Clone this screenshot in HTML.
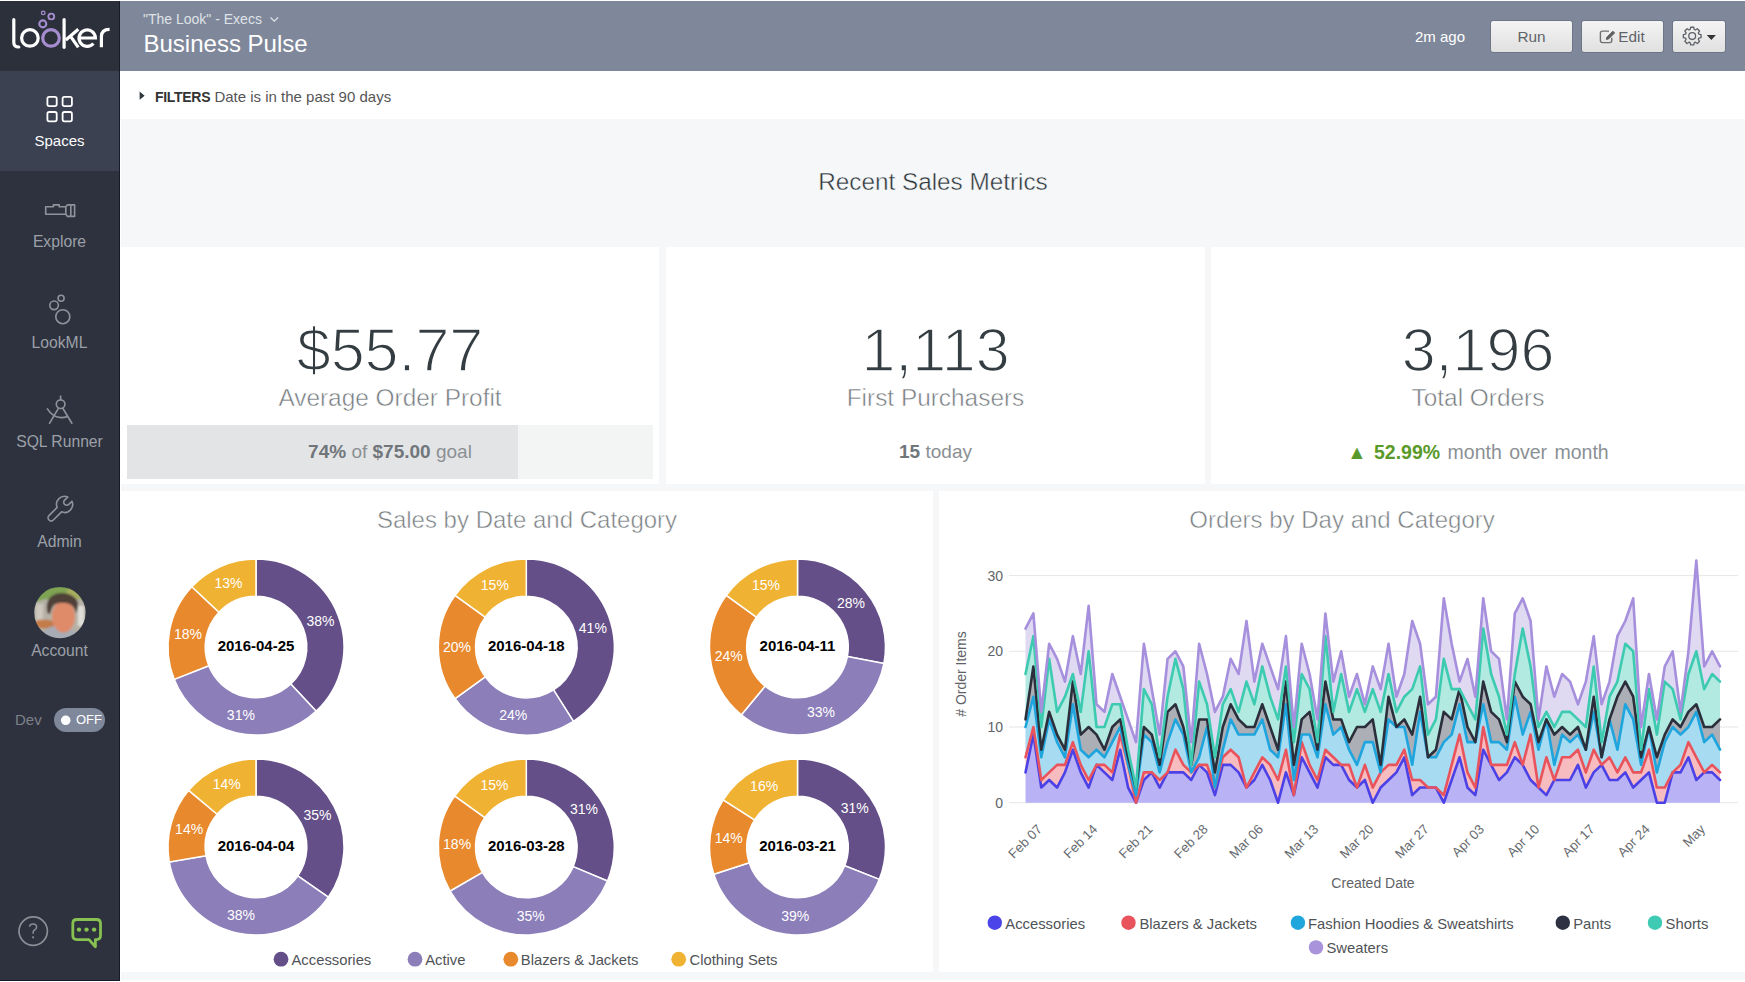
<!DOCTYPE html>
<html><head><meta charset="utf-8">
<style>
*{margin:0;padding:0;box-sizing:border-box}
html,body{width:1745px;height:982px;overflow:hidden;background:#fff;font-family:"Liberation Sans",sans-serif}
.abs{position:absolute;white-space:nowrap}
#side{position:absolute;left:0;top:1px;width:120px;height:980px;background:#2d323e;border-right:1px solid #151c28;border-bottom:1px solid #151c28}
#logo{position:absolute;left:0;top:0;width:119px;height:70px;background:#2b303b}
.nav{position:absolute;left:0;width:119px;height:100px;color:#9ca0a8;font-size:16px}
.nav .lbl{position:absolute;left:0;width:119px;top:60px;text-align:center}
.nav svg{position:absolute;left:0;top:0}
.lbl2{position:absolute;left:0;width:119px;text-align:center;color:#9ca0a8;font-size:15.7px;white-space:nowrap}
#hdr{position:absolute;left:120px;top:1px;width:1625px;height:70px;background:#7f889a}
#filt{position:absolute;left:121px;top:71px;width:1624px;height:48px;background:#fff}
#content{position:absolute;left:121px;top:119px;width:1624px;height:861px;background:#f6f7f9}
.tile{position:absolute;background:#fff}
.btn{position:absolute;top:18.5px;height:33px;border-radius:3px;background:linear-gradient(#f4f4f4,#e0e0e0);border:1px solid #6d7587;color:#606468;font-size:15.3px;text-align:center;line-height:32.5px}
.big{position:absolute;left:0;width:100%;text-align:center;color:#343d42;font-size:61px;-webkit-text-stroke:1.6px #fff;paint-order:normal}
.sub{position:absolute;left:0;width:100%;text-align:center;color:#767c80;font-size:24.4px;-webkit-text-stroke:0.5px #fff}
.cmp{position:absolute;left:0;width:100%;text-align:center;color:#8b9094;font-size:19px;white-space:nowrap}
.cmp b{color:#70767a}
svg text{font-family:"Liberation Sans",sans-serif}
.dl{fill:#fff;font-size:14px;text-anchor:middle}
.dc{fill:#000;font-size:15px;font-weight:bold;text-anchor:middle}
.ya{fill:#606468;font-size:14px;text-anchor:end}
.xa{fill:#686c70;font-size:13.3px;text-anchor:end}
.lg{fill:#4f5357;font-size:14.8px}
.at{fill:#5f6367;font-size:14px;text-anchor:middle}
.ttl{position:absolute;left:0;width:100%;text-align:center;color:#7a7f83;font-size:24px;-webkit-text-stroke:0.5px #fff}
</style></head>
<body>
<div id="side">
  <div id="logo"></div>
  <div class="nav" style="top:70px;height:100px;background:#3b4150"></div>
  <div class="lbl2" style="top:131px;color:#fff;font-size:15px">Spaces</div>
  <div class="lbl2" style="top:232px">Explore</div>
  <div class="lbl2" style="top:332.5px">LookML</div>
  <div class="lbl2" style="top:432px">SQL Runner</div>
  <div class="lbl2" style="top:531.5px">Admin</div>
  <div class="lbl2" style="top:641px">Account</div>
  <div class="abs" style="left:15px;top:710px;color:#7d8189;font-size:15px">Dev</div>
  <div class="abs" style="left:54px;top:707px;width:51px;height:24px;border-radius:12px;background:#7f889a"></div>
  <div class="abs" style="left:76px;top:711px;color:#fff;font-size:13px">OFF</div>
</div>
<svg width="120" height="982" style="position:absolute;left:0;top:0" fill="none">
  <g stroke="#fff" stroke-width="3.2" stroke-linecap="round">
    <path d="M13.8 19.5V42.5Q13.8 47 18.8 47"/>
    <circle cx="29.9" cy="37.9" r="8.3"/>
    <path d="M64.1 19.5V47.3"/>
    <path d="M78.3 29.2L65.8 40M69.9 35.4L78.3 47.3" stroke-linecap="butt"/>
    <path d="M79.2 38H95.4A8.2 8.2 0 1 0 93.4 43.5" stroke-linecap="butt"/>
    <path d="M101.4 47.3V36.5Q101.4 29.3 109.6 29.3" stroke-linecap="butt"/>
  </g>
  <g stroke="#a68dcf">
    <circle cx="51" cy="37.9" r="8.3" stroke-width="3.2"/>
    <circle cx="42.8" cy="23.9" r="3.5" stroke-width="2.1"/>
    <circle cx="51.3" cy="16.5" r="2.9" stroke-width="1.9"/>
    <circle cx="43.2" cy="12.9" r="1.8" stroke-width="1.3"/>
  </g>
  <g stroke="#fff" stroke-width="1.8">
    <rect x="47.4" y="96.8" width="9.3" height="9.3" rx="1.8"/>
    <rect x="62.6" y="96.8" width="9.3" height="9.3" rx="1.8"/>
    <rect x="47.4" y="112" width="9.3" height="9.3" rx="1.8"/>
    <rect x="62.6" y="112" width="9.3" height="9.3" rx="1.8"/>
  </g>
  <g stroke="#8e929a" stroke-width="1.65" stroke-linejoin="round">
    <path d="M45.7 206.7H53.4V204.8H59.2V206.7H65.8V214.2H45.7Z"/>
    <path d="M65.8 206.7L67.5 204.8H74.6V216.4H67.5L65.8 214.2"/>
    <path d="M70.8 205V216.2"/>
    <circle cx="62.8" cy="316.7" r="7"/>
    <circle cx="54.1" cy="305.3" r="4.3"/>
    <circle cx="61.1" cy="298.2" r="3"/>
    <path d="M60.6 395.5V399.6"/>
    <circle cx="60.6" cy="404.2" r="4.3"/>
    <path d="M58.4 408.3L49.2 423.8M62.8 408.3L72.2 423.8"/>
    <path d="M47 408.4Q54.5 420.5 67.3 416.6"/>
    <path transform="translate(64.6 504.4) rotate(-45)" d="M-7.42 3.1L-19 3.1A3.1 3.1 0 0 1 -19 -3.1L-7.42 -3.1A8 8 0 0 1 7.4 -3L3 -3A3 3 0 0 0 3 3L7.4 3A8 8 0 0 1 -7.42 3.1Z"/>
  </g>
  <defs><clipPath id="av"><circle cx="59.9" cy="612.6" r="25.7"/></clipPath><filter id="bl" x="-10%" y="-10%" width="120%" height="120%"><feGaussianBlur stdDeviation="0.9"/></filter></defs>
  <g clip-path="url(#av)" stroke="none"><g filter="url(#bl)">
    <rect x="33" y="586" width="54" height="54" fill="#b6b1a6"/>
    <path d="M33 586H87V601Q75 597 60 598Q45 598 33 603Z" fill="#7ea352"/>
    <ellipse cx="76" cy="593" rx="10" ry="6" fill="#a7ae5e"/>
    <rect x="36" y="604" width="7" height="18" fill="#cdc9bf"/>
    <rect x="78" y="606" width="6" height="20" fill="#e0ded8"/>
    <ellipse cx="44" cy="624" rx="11" ry="4.5" fill="#c47b49"/>
    <path d="M40 641Q43 627 55 626Q66 627 72 630Q80 632 83 641Z" fill="#a7abb3"/>
    <ellipse cx="63.5" cy="616.5" rx="11.5" ry="16" fill="#df8b6b"/>
    <path d="M47 611Q45 597 57 593.5Q71 591 77.5 601Q79 608 76 613Q74 604 66 603Q57 602 53 606Q51 610 50 614Q47 614 47 611Z" fill="#4f4139"/>
  </g></g>
  <g stroke="#8a8e96" stroke-width="1.7">
    <circle cx="33.2" cy="931.1" r="14.2"/>
    <path d="M29.6 926.8Q29.6 923.9 33.1 923.9Q36.6 923.9 36.6 927Q36.6 929 34.6 930Q33.1 930.8 33.1 932.6V933.7" stroke-width="1.5"/>
  </g>
  <circle cx="33.1" cy="937.3" r="1.1" fill="#8a8e96"/>
  <path d="M76.8 919.5H96.5Q100.5 919.5 100.5 923.5V935.6Q100.5 939.6 96.5 939.6H95.4V946.8L89 939.6H76.8Q72.8 939.6 72.8 935.6V923.5Q72.8 919.5 76.8 919.5Z" stroke="#86c151" stroke-width="2.8" stroke-linejoin="round"/>
  <g fill="#86c151"><circle cx="79" cy="929.6" r="2.2"/><circle cx="86.5" cy="929.6" r="2.2"/><circle cx="94.1" cy="929.6" r="2.2"/></g>
  <circle cx="65.7" cy="720.3" r="4.8" fill="#fff"/>
</svg>
<div id="hdr">
  <div class="abs" style="left:23px;top:10px;color:#dfe2e8;font-size:14px">"The Look" - Execs</div>
  <div class="abs" style="left:23.5px;top:28.5px;color:#fff;font-size:24px">Business Pulse</div>
  <div class="abs" style="left:1295px;top:27px;color:#fff;font-size:15px">2m ago</div>
  <div class="btn" style="left:1370px;width:83px">Run</div>
  <div class="btn" style="left:1461px;width:83px;text-indent:18px">Edit</div>
  <div class="btn" style="left:1552px;width:54px"></div>
  <svg width="1625" height="70" style="position:absolute;left:0;top:0" fill="none">
    <path d="M150.5 16.5L154.3 20.2L158 16.5" stroke="#dfe2e8" stroke-width="1.3"/>
    <path d="M1570.13 28.52L1570.64 26.24L1573.76 26.24L1574.27 28.52L1575.39 28.98L1577.36 27.73L1579.57 29.94L1578.32 31.91L1578.78 33.03L1581.06 33.54L1581.06 36.66L1578.78 37.17L1578.32 38.29L1579.57 40.26L1577.36 42.47L1575.39 41.22L1574.27 41.68L1573.76 43.96L1570.64 43.96L1570.13 41.68L1569.01 41.22L1567.04 42.47L1564.83 40.26L1566.08 38.29L1565.62 37.17L1563.34 36.66L1563.34 33.54L1565.62 33.03L1566.08 31.91L1564.83 29.94L1567.04 27.73L1569.01 28.98Z" stroke="#5d6167" stroke-width="1.3" stroke-linejoin="round"/><circle cx="1572.2" cy="35.1" r="3.4" stroke="#5d6167" stroke-width="1.3"/><path d="M1586.8 33.9H1595.9L1591.35 39.1Z" fill="#333" stroke="none"/>
    <g stroke="#5d6167" stroke-width="1.4">
      <path d="M1489 30.1H1482.4Q1480.4 30.1 1480.4 32.1V39.6Q1480.4 41.6 1482.4 41.6H1489.8Q1491.8 41.6 1491.8 39.6V36.8" stroke="#707070"/>
      <path d="M1486.3 38.4L1486.9 36.2L1492.9 30.2L1494.6 31.9L1488.6 37.9Z" fill="#606060" stroke="#606060" stroke-width="1"/>
    </g>
  </svg>
</div>
<div id="filt">
  <div class="abs" style="left:34px;top:17px;color:#333;font-size:15px"><b style="font-size:14px;letter-spacing:-0.3px">FILTERS</b> <span style="color:#555">Date is in the past 90 days</span></div>
</div>
<div id="content">
  <div class="abs" style="left:0;width:1624px;top:49px;text-align:center;color:#2c3438;font-size:24.3px;-webkit-text-stroke:0.45px #f6f7f9">Recent Sales Metrics</div>
  <div class="tile" style="left:0;top:128px;width:538px;height:237px">
    <div class="big" style="top:68px">$55.77</div>
    <div class="sub" style="top:137px">Average Order Profit</div>
    <div class="abs" style="left:6px;top:178px;width:526px;height:54px;background:#f3f4f4"><div style="width:391px;height:54px;background:#e3e4e6"></div></div>
    <div class="cmp" style="top:194px"><b>74%</b> of <b>$75.00</b> goal</div>
  </div>
  <div class="tile" style="left:545px;top:128px;width:539px;height:237px">
    <div class="big" style="top:68px">1,113</div>
    <div class="sub" style="top:137px">First Purchasers</div>
    <div class="cmp" style="top:194px"><b>15</b> today</div>
  </div>
  <div class="tile" style="left:1090px;top:128px;width:534px;height:237px">
    <div class="big" style="top:68px">3,196</div>
    <div class="sub" style="top:137px">Total Orders</div>
    <div class="cmp" style="top:194px;font-size:19.5px;word-spacing:2px"><b style="color:#5a9a2a">&#9650; 52.99%</b> month over month</div>
  </div>
  <div class="tile" style="left:0;top:372px;width:812px;height:481px">
    <div class="ttl" style="top:15px">Sales by Date and Category</div>
  </div>
  <div class="tile" style="left:818px;top:372px;width:806px;height:481px">
    <div class="ttl" style="top:15px">Orders by Day and Category</div>
  </div>
</div>
<svg width="1745" height="982" style="position:absolute;left:0;top:0">
<path d="M139.6 91.6L144.6 95.7L139.6 99.8Z" fill="#2f383c"/>
<circle cx="281" cy="959.2" r="7.4" fill="#644f88"/><text x="291.5" y="965" class="lg">Accessories</text>
<circle cx="415" cy="959.2" r="7.4" fill="#8b7eb9"/><text x="425.2" y="965" class="lg">Active</text>
<circle cx="510.8" cy="959.2" r="7.4" fill="#e8892d"/><text x="520.8" y="965" class="lg">Blazers &amp; Jackets</text>
<circle cx="678.7" cy="959.2" r="7.4" fill="#f0b232"/><text x="689.5" y="965" class="lg">Clothing Sets</text>
<circle cx="994.8" cy="922.7" r="7.2" fill="#4b44e8"/><text x="1005.3" y="928.5" class="lg">Accessories</text>
<circle cx="1128.5" cy="922.7" r="7.2" fill="#e9535c"/><text x="1139.4" y="928.5" class="lg">Blazers &amp; Jackets</text>
<circle cx="1297.9" cy="922.7" r="7.2" fill="#1fa6dc"/><text x="1308" y="928.5" class="lg">Fashion Hoodies &amp; Sweatshirts</text>
<circle cx="1562.8" cy="922.7" r="7.2" fill="#2e3142"/><text x="1573.2" y="928.5" class="lg">Pants</text>
<circle cx="1655" cy="922.7" r="7.2" fill="#3fcbb3"/><text x="1665.6" y="928.5" class="lg">Shorts</text>
<circle cx="1316" cy="947.4" r="7.2" fill="#a993db"/><text x="1326.4" y="953.2" class="lg">Sweaters</text>
<text x="1373" y="887.5" class="at">Created Date</text>
<text x="961" y="679" class="at" transform="rotate(-90 961 674)">&#35; Order Items</text>
<path d="M256 559A88 88 0 0 1 316.24 711.15L290.77 684.03A50.8 50.8 0 0 0 256 596.2Z" fill="#644f88" stroke="#fff" stroke-width="1.5" stroke-linejoin="round"/>
<text x="320.43" y="626.49" class="dl">38%</text>
<path d="M316.24 711.15A88 88 0 0 1 174.18 679.39L208.77 665.7A50.8 50.8 0 0 0 290.77 684.03Z" fill="#8b7eb9" stroke="#fff" stroke-width="1.5" stroke-linejoin="round"/>
<text x="240.88" y="719.63" class="dl">31%</text>
<path d="M174.18 679.39A88 88 0 0 1 191.85 586.76L218.97 612.23A50.8 50.8 0 0 0 208.77 665.7Z" fill="#e8892d" stroke="#fff" stroke-width="1.5" stroke-linejoin="round"/>
<text x="187.93" y="639.01" class="dl">18%</text>
<path d="M191.85 586.76A88 88 0 0 1 256 559L256 596.2A50.8 50.8 0 0 0 218.97 612.23Z" fill="#f0b232" stroke="#fff" stroke-width="1.5" stroke-linejoin="round"/>
<text x="228.48" y="588.4" class="dl">13%</text>
<text x="256" y="650.7" class="dc">2016-04-25</text>
<path d="M526.3 559A88 88 0 0 1 573.45 721.3L553.52 689.89A50.8 50.8 0 0 0 526.3 596.2Z" fill="#644f88" stroke="#fff" stroke-width="1.5" stroke-linejoin="round"/>
<text x="592.85" y="632.67" class="dl">41%</text>
<path d="M573.45 721.3A88 88 0 0 1 455.11 698.73L485.2 676.86A50.8 50.8 0 0 0 553.52 689.89Z" fill="#8b7eb9" stroke="#fff" stroke-width="1.5" stroke-linejoin="round"/>
<text x="513.31" y="720.07" class="dl">24%</text>
<path d="M455.11 698.73A88 88 0 0 1 455.11 595.27L485.2 617.14A50.8 50.8 0 0 0 485.2 676.86Z" fill="#e8892d" stroke="#fff" stroke-width="1.5" stroke-linejoin="round"/>
<text x="457" y="652" class="dl">20%</text>
<path d="M455.11 595.27A88 88 0 0 1 526.3 559L526.3 596.2A50.8 50.8 0 0 0 485.2 617.14Z" fill="#f0b232" stroke="#fff" stroke-width="1.5" stroke-linejoin="round"/>
<text x="494.84" y="590.25" class="dl">15%</text>
<text x="526.3" y="650.7" class="dc">2016-04-18</text>
<path d="M797.5 559A88 88 0 0 1 883.94 663.49L847.4 656.52A50.8 50.8 0 0 0 797.5 596.2Z" fill="#644f88" stroke="#fff" stroke-width="1.5" stroke-linejoin="round"/>
<text x="850.9" y="607.83" class="dl">28%</text>
<path d="M883.94 663.49A88 88 0 0 1 741.41 714.81L765.12 686.14A50.8 50.8 0 0 0 847.4 656.52Z" fill="#8b7eb9" stroke="#fff" stroke-width="1.5" stroke-linejoin="round"/>
<text x="820.97" y="717.2" class="dl">33%</text>
<path d="M741.41 714.81A88 88 0 0 1 726.31 595.27L756.4 617.14A50.8 50.8 0 0 0 765.12 686.14Z" fill="#e8892d" stroke="#fff" stroke-width="1.5" stroke-linejoin="round"/>
<text x="728.75" y="660.69" class="dl">24%</text>
<path d="M726.31 595.27A88 88 0 0 1 797.5 559L797.5 596.2A50.8 50.8 0 0 0 756.4 617.14Z" fill="#f0b232" stroke="#fff" stroke-width="1.5" stroke-linejoin="round"/>
<text x="766.04" y="590.25" class="dl">15%</text>
<text x="797.5" y="650.7" class="dc">2016-04-11</text>
<path d="M256 759A88 88 0 0 1 328.3 897.16L297.74 875.96A50.8 50.8 0 0 0 256 796.2Z" fill="#644f88" stroke="#fff" stroke-width="1.5" stroke-linejoin="round"/>
<text x="317.4" y="819.87" class="dl">35%</text>
<path d="M328.3 897.16A88 88 0 0 1 169.28 861.98L205.94 855.65A50.8 50.8 0 0 0 297.74 875.96Z" fill="#8b7eb9" stroke="#fff" stroke-width="1.5" stroke-linejoin="round"/>
<text x="241.03" y="919.66" class="dl">38%</text>
<path d="M169.28 861.98A88 88 0 0 1 188.69 790.32L217.14 814.28A50.8 50.8 0 0 0 205.94 855.65Z" fill="#e8892d" stroke="#fff" stroke-width="1.5" stroke-linejoin="round"/>
<text x="189.11" y="833.89" class="dl">14%</text>
<path d="M188.69 790.32A88 88 0 0 1 256 759L256 796.2A50.8 50.8 0 0 0 217.14 814.28Z" fill="#f0b232" stroke="#fff" stroke-width="1.5" stroke-linejoin="round"/>
<text x="226.77" y="789.17" class="dl">14%</text>
<text x="256" y="850.7" class="dc">2016-04-04</text>
<path d="M526.3 759A88 88 0 0 1 607.47 881L573.16 866.63A50.8 50.8 0 0 0 526.3 796.2Z" fill="#644f88" stroke="#fff" stroke-width="1.5" stroke-linejoin="round"/>
<text x="584" y="813.61" class="dl">31%</text>
<path d="M607.47 881A88 88 0 0 1 450.09 891L482.31 872.4A50.8 50.8 0 0 0 573.16 866.63Z" fill="#8b7eb9" stroke="#fff" stroke-width="1.5" stroke-linejoin="round"/>
<text x="530.7" y="921.16" class="dl">35%</text>
<path d="M450.09 891A88 88 0 0 1 454.62 795.95L484.92 817.53A50.8 50.8 0 0 0 482.31 872.4Z" fill="#e8892d" stroke="#fff" stroke-width="1.5" stroke-linejoin="round"/>
<text x="457.08" y="848.7" class="dl">18%</text>
<path d="M454.62 795.95A88 88 0 0 1 526.3 759L526.3 796.2A50.8 50.8 0 0 0 484.92 817.53Z" fill="#f0b232" stroke="#fff" stroke-width="1.5" stroke-linejoin="round"/>
<text x="494.54" y="790.4" class="dl">15%</text>
<text x="526.3" y="850.7" class="dc">2016-03-28</text>
<path d="M797.5 759A88 88 0 0 1 879.32 879.39L844.73 865.7A50.8 50.8 0 0 0 797.5 796.2Z" fill="#644f88" stroke="#fff" stroke-width="1.5" stroke-linejoin="round"/>
<text x="854.82" y="813.05" class="dl">31%</text>
<path d="M879.32 879.39A88 88 0 0 1 713.81 874.19L749.19 862.7A50.8 50.8 0 0 0 844.73 865.7Z" fill="#8b7eb9" stroke="#fff" stroke-width="1.5" stroke-linejoin="round"/>
<text x="795.32" y="921.27" class="dl">39%</text>
<path d="M713.81 874.19A88 88 0 0 1 723.2 799.85L754.61 819.78A50.8 50.8 0 0 0 749.19 862.7Z" fill="#e8892d" stroke="#fff" stroke-width="1.5" stroke-linejoin="round"/>
<text x="728.75" y="843.31" class="dl">14%</text>
<path d="M723.2 799.85A88 88 0 0 1 797.5 759L797.5 796.2A50.8 50.8 0 0 0 754.61 819.78Z" fill="#f0b232" stroke="#fff" stroke-width="1.5" stroke-linejoin="round"/>
<text x="764.11" y="791.27" class="dl">16%</text>
<text x="797.5" y="850.7" class="dc">2016-03-21</text>
<rect x="1009" y="802.2" width="729" height="1" fill="#e6e6e6"/>
<text x="1003" y="807.7" class="ya">0</text>
<rect x="1009" y="726.5" width="729" height="1" fill="#e6e6e6"/>
<text x="1003" y="732" class="ya">10</text>
<rect x="1009" y="650.8" width="729" height="1" fill="#e6e6e6"/>
<text x="1003" y="656.3" class="ya">20</text>
<rect x="1009" y="575.1" width="729" height="1" fill="#e6e6e6"/>
<text x="1003" y="580.6" class="ya">30</text>
<text x="1043.07" y="830" class="xa" transform="rotate(-45 1043.07 830)">Feb 07</text>
<text x="1098.31" y="830" class="xa" transform="rotate(-45 1098.31 830)">Feb 14</text>
<text x="1153.56" y="830" class="xa" transform="rotate(-45 1153.56 830)">Feb 21</text>
<text x="1208.8" y="830" class="xa" transform="rotate(-45 1208.8 830)">Feb 28</text>
<text x="1264.05" y="830" class="xa" transform="rotate(-45 1264.05 830)">Mar 06</text>
<text x="1319.29" y="830" class="xa" transform="rotate(-45 1319.29 830)">Mar 13</text>
<text x="1374.53" y="830" class="xa" transform="rotate(-45 1374.53 830)">Mar 20</text>
<text x="1429.78" y="830" class="xa" transform="rotate(-45 1429.78 830)">Mar 27</text>
<text x="1485.02" y="830" class="xa" transform="rotate(-45 1485.02 830)">Apr 03</text>
<text x="1540.27" y="830" class="xa" transform="rotate(-45 1540.27 830)">Apr 10</text>
<text x="1595.51" y="830" class="xa" transform="rotate(-45 1595.51 830)">Apr 17</text>
<text x="1650.76" y="830" class="xa" transform="rotate(-45 1650.76 830)">Apr 24</text>
<text x="1706" y="830" class="xa" transform="rotate(-45 1706 830)">May</text>
<path d="M1025.5 628.59L1033.39 613.45L1041.28 711.86L1049.18 643.73L1057.07 658.87L1064.96 681.58L1072.85 636.16L1080.74 674.01L1088.64 605.88L1096.53 704.29L1104.42 711.86L1112.31 674.01L1120.2 696.72L1128.1 719.43L1135.99 742.14L1143.88 643.73L1151.77 689.15L1159.66 734.57L1167.56 658.87L1175.45 651.3L1183.34 666.44L1191.23 742.14L1199.12 643.73L1207.02 674.01L1214.91 711.86L1222.8 696.72L1230.69 658.87L1238.59 674.01L1246.48 621.02L1254.37 681.58L1262.26 643.73L1270.15 666.44L1278.05 689.15L1285.94 636.16L1293.83 727L1301.72 643.73L1309.61 674.01L1317.51 719.43L1325.4 613.45L1333.29 681.58L1341.18 651.3L1349.07 696.72L1356.97 674.01L1364.86 704.29L1372.75 666.44L1380.64 689.15L1388.53 643.73L1396.43 696.72L1404.32 674.01L1412.21 621.02L1420.1 643.73L1427.99 704.29L1435.89 696.72L1443.78 598.31L1451.67 643.73L1459.56 681.58L1467.45 658.87L1475.35 696.72L1483.24 598.31L1491.13 651.3L1499.02 658.87L1506.91 719.43L1514.81 613.45L1522.7 598.31L1530.59 621.02L1538.48 719.43L1546.38 666.44L1554.27 696.72L1562.16 674.01L1570.05 681.58L1577.94 704.29L1585.84 681.58L1593.73 636.16L1601.62 704.29L1609.51 681.58L1617.4 636.16L1625.3 621.02L1633.19 598.31L1641.08 727L1648.97 674.01L1656.86 719.43L1664.76 666.44L1672.65 651.3L1680.54 711.86L1688.43 651.3L1696.32 560.46L1704.22 666.44L1712.11 651.3L1720 666.44L1720 681.58L1712.11 674.01L1704.22 689.15L1696.32 651.3L1688.43 674.01L1680.54 719.43L1672.65 689.15L1664.76 681.58L1656.86 734.57L1648.97 689.15L1641.08 749.71L1633.19 651.3L1625.3 643.73L1617.4 681.58L1609.51 696.72L1601.62 742.14L1593.73 666.44L1585.84 727L1577.94 719.43L1570.05 711.86L1562.16 711.86L1554.27 727L1546.38 711.86L1538.48 727L1530.59 666.44L1522.7 628.59L1514.81 674.01L1506.91 734.57L1499.02 696.72L1491.13 674.01L1483.24 628.59L1475.35 719.43L1467.45 704.29L1459.56 689.15L1451.67 689.15L1443.78 658.87L1435.89 719.43L1427.99 734.57L1420.1 666.44L1412.21 689.15L1404.32 696.72L1396.43 711.86L1388.53 674.01L1380.64 711.86L1372.75 689.15L1364.86 711.86L1356.97 689.15L1349.07 711.86L1341.18 674.01L1333.29 711.86L1325.4 636.16L1317.51 742.14L1309.61 689.15L1301.72 674.01L1293.83 742.14L1285.94 666.44L1278.05 719.43L1270.15 696.72L1262.26 666.44L1254.37 704.29L1246.48 681.58L1238.59 711.86L1230.69 689.15L1222.8 704.29L1214.91 757.28L1207.02 704.29L1199.12 681.58L1191.23 764.85L1183.34 689.15L1175.45 658.87L1167.56 696.72L1159.66 757.28L1151.77 704.29L1143.88 689.15L1135.99 787.56L1128.1 749.71L1120.2 704.29L1112.31 704.29L1104.42 727L1096.53 727L1088.64 651.3L1080.74 711.86L1072.85 674.01L1064.96 696.72L1057.07 711.86L1049.18 658.87L1041.28 727L1033.39 636.16L1025.5 674.01Z" fill="#e0d9f2"/>
<path d="M1025.5 674.01L1033.39 636.16L1041.28 727L1049.18 658.87L1057.07 711.86L1064.96 696.72L1072.85 674.01L1080.74 711.86L1088.64 651.3L1096.53 727L1104.42 727L1112.31 704.29L1120.2 704.29L1128.1 749.71L1135.99 787.56L1143.88 689.15L1151.77 704.29L1159.66 757.28L1167.56 696.72L1175.45 658.87L1183.34 689.15L1191.23 764.85L1199.12 681.58L1207.02 704.29L1214.91 757.28L1222.8 704.29L1230.69 689.15L1238.59 711.86L1246.48 681.58L1254.37 704.29L1262.26 666.44L1270.15 696.72L1278.05 719.43L1285.94 666.44L1293.83 742.14L1301.72 674.01L1309.61 689.15L1317.51 742.14L1325.4 636.16L1333.29 711.86L1341.18 674.01L1349.07 711.86L1356.97 689.15L1364.86 711.86L1372.75 689.15L1380.64 711.86L1388.53 674.01L1396.43 711.86L1404.32 696.72L1412.21 689.15L1420.1 666.44L1427.99 734.57L1435.89 719.43L1443.78 658.87L1451.67 689.15L1459.56 689.15L1467.45 704.29L1475.35 719.43L1483.24 628.59L1491.13 674.01L1499.02 696.72L1506.91 734.57L1514.81 674.01L1522.7 628.59L1530.59 666.44L1538.48 727L1546.38 711.86L1554.27 727L1562.16 711.86L1570.05 711.86L1577.94 719.43L1585.84 727L1593.73 666.44L1601.62 742.14L1609.51 696.72L1617.4 681.58L1625.3 643.73L1633.19 651.3L1641.08 749.71L1648.97 689.15L1656.86 734.57L1664.76 681.58L1672.65 689.15L1680.54 719.43L1688.43 674.01L1696.32 651.3L1704.22 689.15L1712.11 674.01L1720 681.58L1720 719.43L1712.11 727L1704.22 727L1696.32 704.29L1688.43 711.86L1680.54 727L1672.65 719.43L1664.76 734.57L1656.86 757.28L1648.97 727L1641.08 757.28L1633.19 696.72L1625.3 681.58L1617.4 696.72L1609.51 719.43L1601.62 757.28L1593.73 696.72L1585.84 749.71L1577.94 727L1570.05 734.57L1562.16 727L1554.27 734.57L1546.38 719.43L1538.48 742.14L1530.59 704.29L1522.7 696.72L1514.81 681.58L1506.91 742.14L1499.02 719.43L1491.13 711.86L1483.24 681.58L1475.35 742.14L1467.45 727L1459.56 689.15L1451.67 719.43L1443.78 711.86L1435.89 749.71L1427.99 757.28L1420.1 696.72L1412.21 734.57L1404.32 719.43L1396.43 727L1388.53 696.72L1380.64 764.85L1372.75 719.43L1364.86 727L1356.97 727L1349.07 742.14L1341.18 719.43L1333.29 719.43L1325.4 681.58L1317.51 749.71L1309.61 711.86L1301.72 719.43L1293.83 764.85L1285.94 681.58L1278.05 749.71L1270.15 727L1262.26 704.29L1254.37 727L1246.48 727L1238.59 719.43L1230.69 704.29L1222.8 727L1214.91 772.42L1207.02 719.43L1199.12 719.43L1191.23 764.85L1183.34 727L1175.45 704.29L1167.56 711.86L1159.66 764.85L1151.77 734.57L1143.88 727L1135.99 787.56L1128.1 757.28L1120.2 719.43L1112.31 727L1104.42 749.71L1096.53 734.57L1088.64 727L1080.74 734.57L1072.85 681.58L1064.96 749.71L1057.07 734.57L1049.18 711.86L1041.28 749.71L1033.39 666.44L1025.5 719.43Z" fill="#b2e9e0"/>
<path d="M1025.5 719.43L1033.39 666.44L1041.28 749.71L1049.18 711.86L1057.07 734.57L1064.96 749.71L1072.85 681.58L1080.74 734.57L1088.64 727L1096.53 734.57L1104.42 749.71L1112.31 727L1120.2 719.43L1128.1 757.28L1135.99 787.56L1143.88 727L1151.77 734.57L1159.66 764.85L1167.56 711.86L1175.45 704.29L1183.34 727L1191.23 764.85L1199.12 719.43L1207.02 719.43L1214.91 772.42L1222.8 727L1230.69 704.29L1238.59 719.43L1246.48 727L1254.37 727L1262.26 704.29L1270.15 727L1278.05 749.71L1285.94 681.58L1293.83 764.85L1301.72 719.43L1309.61 711.86L1317.51 749.71L1325.4 681.58L1333.29 719.43L1341.18 719.43L1349.07 742.14L1356.97 727L1364.86 727L1372.75 719.43L1380.64 764.85L1388.53 696.72L1396.43 727L1404.32 719.43L1412.21 734.57L1420.1 696.72L1427.99 757.28L1435.89 749.71L1443.78 711.86L1451.67 719.43L1459.56 689.15L1467.45 727L1475.35 742.14L1483.24 681.58L1491.13 711.86L1499.02 719.43L1506.91 742.14L1514.81 681.58L1522.7 696.72L1530.59 704.29L1538.48 742.14L1546.38 719.43L1554.27 734.57L1562.16 727L1570.05 734.57L1577.94 727L1585.84 749.71L1593.73 696.72L1601.62 757.28L1609.51 719.43L1617.4 696.72L1625.3 681.58L1633.19 696.72L1641.08 757.28L1648.97 727L1656.86 757.28L1664.76 734.57L1672.65 719.43L1680.54 727L1688.43 711.86L1696.32 704.29L1704.22 727L1712.11 727L1720 719.43L1720 749.71L1712.11 734.57L1704.22 742.14L1696.32 711.86L1688.43 727L1680.54 734.57L1672.65 727L1664.76 742.14L1656.86 772.42L1648.97 727L1641.08 764.85L1633.19 719.43L1625.3 704.29L1617.4 749.71L1609.51 719.43L1601.62 757.28L1593.73 711.86L1585.84 749.71L1577.94 734.57L1570.05 742.14L1562.16 734.57L1554.27 764.85L1546.38 719.43L1538.48 749.71L1530.59 711.86L1522.7 734.57L1514.81 696.72L1506.91 749.71L1499.02 742.14L1491.13 742.14L1483.24 704.29L1475.35 742.14L1467.45 742.14L1459.56 704.29L1451.67 734.57L1443.78 742.14L1435.89 757.28L1427.99 757.28L1420.1 711.86L1412.21 764.85L1404.32 727L1396.43 727L1388.53 719.43L1380.64 772.42L1372.75 742.14L1364.86 742.14L1356.97 764.85L1349.07 749.71L1341.18 727L1333.29 734.57L1325.4 704.29L1317.51 757.28L1309.61 734.57L1301.72 734.57L1293.83 779.99L1285.94 704.29L1278.05 757.28L1270.15 749.71L1262.26 719.43L1254.37 734.57L1246.48 734.57L1238.59 734.57L1230.69 719.43L1222.8 749.71L1214.91 787.56L1207.02 727L1199.12 757.28L1191.23 772.42L1183.34 734.57L1175.45 719.43L1167.56 742.14L1159.66 772.42L1151.77 742.14L1143.88 734.57L1135.99 795.13L1128.1 764.85L1120.2 727L1112.31 742.14L1104.42 757.28L1096.53 749.71L1088.64 757.28L1080.74 749.71L1072.85 704.29L1064.96 757.28L1057.07 742.14L1049.18 719.43L1041.28 757.28L1033.39 696.72L1025.5 727Z" fill="#adafb6"/>
<path d="M1025.5 727L1033.39 696.72L1041.28 757.28L1049.18 719.43L1057.07 742.14L1064.96 757.28L1072.85 704.29L1080.74 749.71L1088.64 757.28L1096.53 749.71L1104.42 757.28L1112.31 742.14L1120.2 727L1128.1 764.85L1135.99 795.13L1143.88 734.57L1151.77 742.14L1159.66 772.42L1167.56 742.14L1175.45 719.43L1183.34 734.57L1191.23 772.42L1199.12 757.28L1207.02 727L1214.91 787.56L1222.8 749.71L1230.69 719.43L1238.59 734.57L1246.48 734.57L1254.37 734.57L1262.26 719.43L1270.15 749.71L1278.05 757.28L1285.94 704.29L1293.83 779.99L1301.72 734.57L1309.61 734.57L1317.51 757.28L1325.4 704.29L1333.29 734.57L1341.18 727L1349.07 749.71L1356.97 764.85L1364.86 742.14L1372.75 742.14L1380.64 772.42L1388.53 719.43L1396.43 727L1404.32 727L1412.21 764.85L1420.1 711.86L1427.99 757.28L1435.89 757.28L1443.78 742.14L1451.67 734.57L1459.56 704.29L1467.45 742.14L1475.35 742.14L1483.24 704.29L1491.13 742.14L1499.02 742.14L1506.91 749.71L1514.81 696.72L1522.7 734.57L1530.59 711.86L1538.48 749.71L1546.38 719.43L1554.27 764.85L1562.16 734.57L1570.05 742.14L1577.94 734.57L1585.84 749.71L1593.73 711.86L1601.62 757.28L1609.51 719.43L1617.4 749.71L1625.3 704.29L1633.19 719.43L1641.08 764.85L1648.97 727L1656.86 772.42L1664.76 742.14L1672.65 727L1680.54 734.57L1688.43 727L1696.32 711.86L1704.22 742.14L1712.11 734.57L1720 749.71L1720 772.42L1712.11 764.85L1704.22 772.42L1696.32 757.28L1688.43 742.14L1680.54 764.85L1672.65 772.42L1664.76 787.56L1656.86 787.56L1648.97 749.71L1641.08 772.42L1633.19 772.42L1625.3 757.28L1617.4 772.42L1609.51 757.28L1601.62 764.85L1593.73 749.71L1585.84 772.42L1577.94 749.71L1570.05 757.28L1562.16 757.28L1554.27 779.99L1546.38 757.28L1538.48 787.56L1530.59 734.57L1522.7 764.85L1514.81 742.14L1506.91 764.85L1499.02 764.85L1491.13 764.85L1483.24 727L1475.35 787.56L1467.45 772.42L1459.56 734.57L1451.67 764.85L1443.78 795.13L1435.89 787.56L1427.99 787.56L1420.1 779.99L1412.21 779.99L1404.32 749.71L1396.43 764.85L1388.53 764.85L1380.64 772.42L1372.75 787.56L1364.86 764.85L1356.97 787.56L1349.07 764.85L1341.18 764.85L1333.29 757.28L1325.4 749.71L1317.51 779.99L1309.61 764.85L1301.72 742.14L1293.83 795.13L1285.94 749.71L1278.05 779.99L1270.15 764.85L1262.26 757.28L1254.37 772.42L1246.48 787.56L1238.59 757.28L1230.69 749.71L1222.8 757.28L1214.91 787.56L1207.02 764.85L1199.12 764.85L1191.23 772.42L1183.34 764.85L1175.45 749.71L1167.56 772.42L1159.66 779.99L1151.77 772.42L1143.88 772.42L1135.99 802.7L1128.1 764.85L1120.2 734.57L1112.31 772.42L1104.42 764.85L1096.53 764.85L1088.64 779.99L1080.74 764.85L1072.85 742.14L1064.96 764.85L1057.07 764.85L1049.18 772.42L1041.28 779.99L1033.39 727L1025.5 757.28Z" fill="#a6dbf1"/>
<path d="M1025.5 757.28L1033.39 727L1041.28 779.99L1049.18 772.42L1057.07 764.85L1064.96 764.85L1072.85 742.14L1080.74 764.85L1088.64 779.99L1096.53 764.85L1104.42 764.85L1112.31 772.42L1120.2 734.57L1128.1 764.85L1135.99 802.7L1143.88 772.42L1151.77 772.42L1159.66 779.99L1167.56 772.42L1175.45 749.71L1183.34 764.85L1191.23 772.42L1199.12 764.85L1207.02 764.85L1214.91 787.56L1222.8 757.28L1230.69 749.71L1238.59 757.28L1246.48 787.56L1254.37 772.42L1262.26 757.28L1270.15 764.85L1278.05 779.99L1285.94 749.71L1293.83 795.13L1301.72 742.14L1309.61 764.85L1317.51 779.99L1325.4 749.71L1333.29 757.28L1341.18 764.85L1349.07 764.85L1356.97 787.56L1364.86 764.85L1372.75 787.56L1380.64 772.42L1388.53 764.85L1396.43 764.85L1404.32 749.71L1412.21 779.99L1420.1 779.99L1427.99 787.56L1435.89 787.56L1443.78 795.13L1451.67 764.85L1459.56 734.57L1467.45 772.42L1475.35 787.56L1483.24 727L1491.13 764.85L1499.02 764.85L1506.91 764.85L1514.81 742.14L1522.7 764.85L1530.59 734.57L1538.48 787.56L1546.38 757.28L1554.27 779.99L1562.16 757.28L1570.05 757.28L1577.94 749.71L1585.84 772.42L1593.73 749.71L1601.62 764.85L1609.51 757.28L1617.4 772.42L1625.3 757.28L1633.19 772.42L1641.08 772.42L1648.97 749.71L1656.86 787.56L1664.76 787.56L1672.65 772.42L1680.54 764.85L1688.43 742.14L1696.32 757.28L1704.22 772.42L1712.11 764.85L1720 772.42L1720 779.99L1712.11 772.42L1704.22 772.42L1696.32 779.99L1688.43 757.28L1680.54 772.42L1672.65 772.42L1664.76 802.7L1656.86 802.7L1648.97 772.42L1641.08 779.99L1633.19 787.56L1625.3 772.42L1617.4 779.99L1609.51 779.99L1601.62 764.85L1593.73 772.42L1585.84 787.56L1577.94 764.85L1570.05 779.99L1562.16 779.99L1554.27 779.99L1546.38 795.13L1538.48 787.56L1530.59 779.99L1522.7 764.85L1514.81 757.28L1506.91 772.42L1499.02 779.99L1491.13 764.85L1483.24 749.71L1475.35 795.13L1467.45 787.56L1459.56 757.28L1451.67 779.99L1443.78 802.7L1435.89 787.56L1427.99 787.56L1420.1 787.56L1412.21 795.13L1404.32 757.28L1396.43 772.42L1388.53 779.99L1380.64 787.56L1372.75 802.7L1364.86 779.99L1356.97 787.56L1349.07 779.99L1341.18 764.85L1333.29 764.85L1325.4 757.28L1317.51 787.56L1309.61 772.42L1301.72 757.28L1293.83 795.13L1285.94 772.42L1278.05 802.7L1270.15 779.99L1262.26 764.85L1254.37 779.99L1246.48 787.56L1238.59 772.42L1230.69 764.85L1222.8 764.85L1214.91 795.13L1207.02 772.42L1199.12 764.85L1191.23 779.99L1183.34 772.42L1175.45 772.42L1167.56 772.42L1159.66 787.56L1151.77 772.42L1143.88 779.99L1135.99 802.7L1128.1 787.56L1120.2 749.71L1112.31 779.99L1104.42 772.42L1096.53 764.85L1088.64 787.56L1080.74 772.42L1072.85 749.71L1064.96 772.42L1057.07 787.56L1049.18 779.99L1041.28 787.56L1033.39 734.57L1025.5 772.42Z" fill="#f6bcc0"/>
<path d="M1025.5 772.42L1033.39 734.57L1041.28 787.56L1049.18 779.99L1057.07 787.56L1064.96 772.42L1072.85 749.71L1080.74 772.42L1088.64 787.56L1096.53 764.85L1104.42 772.42L1112.31 779.99L1120.2 749.71L1128.1 787.56L1135.99 802.7L1143.88 779.99L1151.77 772.42L1159.66 787.56L1167.56 772.42L1175.45 772.42L1183.34 772.42L1191.23 779.99L1199.12 764.85L1207.02 772.42L1214.91 795.13L1222.8 764.85L1230.69 764.85L1238.59 772.42L1246.48 787.56L1254.37 779.99L1262.26 764.85L1270.15 779.99L1278.05 802.7L1285.94 772.42L1293.83 795.13L1301.72 757.28L1309.61 772.42L1317.51 787.56L1325.4 757.28L1333.29 764.85L1341.18 764.85L1349.07 779.99L1356.97 787.56L1364.86 779.99L1372.75 802.7L1380.64 787.56L1388.53 779.99L1396.43 772.42L1404.32 757.28L1412.21 795.13L1420.1 787.56L1427.99 787.56L1435.89 787.56L1443.78 802.7L1451.67 779.99L1459.56 757.28L1467.45 787.56L1475.35 795.13L1483.24 749.71L1491.13 764.85L1499.02 779.99L1506.91 772.42L1514.81 757.28L1522.7 764.85L1530.59 779.99L1538.48 787.56L1546.38 795.13L1554.27 779.99L1562.16 779.99L1570.05 779.99L1577.94 764.85L1585.84 787.56L1593.73 772.42L1601.62 764.85L1609.51 779.99L1617.4 779.99L1625.3 772.42L1633.19 787.56L1641.08 779.99L1648.97 772.42L1656.86 802.7L1664.76 802.7L1672.65 772.42L1680.54 772.42L1688.43 757.28L1696.32 779.99L1704.22 772.42L1712.11 772.42L1720 779.99L1720 802.7L1025.5 802.7Z" fill="#b9b2f5"/>
<path d="M1025.5 772.42L1033.39 734.57L1041.28 787.56L1049.18 779.99L1057.07 787.56L1064.96 772.42L1072.85 749.71L1080.74 772.42L1088.64 787.56L1096.53 764.85L1104.42 772.42L1112.31 779.99L1120.2 749.71L1128.1 787.56L1135.99 802.7L1143.88 779.99L1151.77 772.42L1159.66 787.56L1167.56 772.42L1175.45 772.42L1183.34 772.42L1191.23 779.99L1199.12 764.85L1207.02 772.42L1214.91 795.13L1222.8 764.85L1230.69 764.85L1238.59 772.42L1246.48 787.56L1254.37 779.99L1262.26 764.85L1270.15 779.99L1278.05 802.7L1285.94 772.42L1293.83 795.13L1301.72 757.28L1309.61 772.42L1317.51 787.56L1325.4 757.28L1333.29 764.85L1341.18 764.85L1349.07 779.99L1356.97 787.56L1364.86 779.99L1372.75 802.7L1380.64 787.56L1388.53 779.99L1396.43 772.42L1404.32 757.28L1412.21 795.13L1420.1 787.56L1427.99 787.56L1435.89 787.56L1443.78 802.7L1451.67 779.99L1459.56 757.28L1467.45 787.56L1475.35 795.13L1483.24 749.71L1491.13 764.85L1499.02 779.99L1506.91 772.42L1514.81 757.28L1522.7 764.85L1530.59 779.99L1538.48 787.56L1546.38 795.13L1554.27 779.99L1562.16 779.99L1570.05 779.99L1577.94 764.85L1585.84 787.56L1593.73 772.42L1601.62 764.85L1609.51 779.99L1617.4 779.99L1625.3 772.42L1633.19 787.56L1641.08 779.99L1648.97 772.42L1656.86 802.7L1664.76 802.7L1672.65 772.42L1680.54 772.42L1688.43 757.28L1696.32 779.99L1704.22 772.42L1712.11 772.42L1720 779.99" fill="none" stroke="#4b41e6" stroke-width="2.6" stroke-linejoin="round" stroke-linecap="round"/>
<path d="M1025.5 757.28L1033.39 727L1041.28 779.99L1049.18 772.42L1057.07 764.85L1064.96 764.85L1072.85 742.14L1080.74 764.85L1088.64 779.99L1096.53 764.85L1104.42 764.85L1112.31 772.42L1120.2 734.57L1128.1 764.85L1135.99 802.7L1143.88 772.42L1151.77 772.42L1159.66 779.99L1167.56 772.42L1175.45 749.71L1183.34 764.85L1191.23 772.42L1199.12 764.85L1207.02 764.85L1214.91 787.56L1222.8 757.28L1230.69 749.71L1238.59 757.28L1246.48 787.56L1254.37 772.42L1262.26 757.28L1270.15 764.85L1278.05 779.99L1285.94 749.71L1293.83 795.13L1301.72 742.14L1309.61 764.85L1317.51 779.99L1325.4 749.71L1333.29 757.28L1341.18 764.85L1349.07 764.85L1356.97 787.56L1364.86 764.85L1372.75 787.56L1380.64 772.42L1388.53 764.85L1396.43 764.85L1404.32 749.71L1412.21 779.99L1420.1 779.99L1427.99 787.56L1435.89 787.56L1443.78 795.13L1451.67 764.85L1459.56 734.57L1467.45 772.42L1475.35 787.56L1483.24 727L1491.13 764.85L1499.02 764.85L1506.91 764.85L1514.81 742.14L1522.7 764.85L1530.59 734.57L1538.48 787.56L1546.38 757.28L1554.27 779.99L1562.16 757.28L1570.05 757.28L1577.94 749.71L1585.84 772.42L1593.73 749.71L1601.62 764.85L1609.51 757.28L1617.4 772.42L1625.3 757.28L1633.19 772.42L1641.08 772.42L1648.97 749.71L1656.86 787.56L1664.76 787.56L1672.65 772.42L1680.54 764.85L1688.43 742.14L1696.32 757.28L1704.22 772.42L1712.11 764.85L1720 772.42" fill="none" stroke="#e9535c" stroke-width="2.6" stroke-linejoin="round" stroke-linecap="round"/>
<path d="M1025.5 727L1033.39 696.72L1041.28 757.28L1049.18 719.43L1057.07 742.14L1064.96 757.28L1072.85 704.29L1080.74 749.71L1088.64 757.28L1096.53 749.71L1104.42 757.28L1112.31 742.14L1120.2 727L1128.1 764.85L1135.99 795.13L1143.88 734.57L1151.77 742.14L1159.66 772.42L1167.56 742.14L1175.45 719.43L1183.34 734.57L1191.23 772.42L1199.12 757.28L1207.02 727L1214.91 787.56L1222.8 749.71L1230.69 719.43L1238.59 734.57L1246.48 734.57L1254.37 734.57L1262.26 719.43L1270.15 749.71L1278.05 757.28L1285.94 704.29L1293.83 779.99L1301.72 734.57L1309.61 734.57L1317.51 757.28L1325.4 704.29L1333.29 734.57L1341.18 727L1349.07 749.71L1356.97 764.85L1364.86 742.14L1372.75 742.14L1380.64 772.42L1388.53 719.43L1396.43 727L1404.32 727L1412.21 764.85L1420.1 711.86L1427.99 757.28L1435.89 757.28L1443.78 742.14L1451.67 734.57L1459.56 704.29L1467.45 742.14L1475.35 742.14L1483.24 704.29L1491.13 742.14L1499.02 742.14L1506.91 749.71L1514.81 696.72L1522.7 734.57L1530.59 711.86L1538.48 749.71L1546.38 719.43L1554.27 764.85L1562.16 734.57L1570.05 742.14L1577.94 734.57L1585.84 749.71L1593.73 711.86L1601.62 757.28L1609.51 719.43L1617.4 749.71L1625.3 704.29L1633.19 719.43L1641.08 764.85L1648.97 727L1656.86 772.42L1664.76 742.14L1672.65 727L1680.54 734.57L1688.43 727L1696.32 711.86L1704.22 742.14L1712.11 734.57L1720 749.71" fill="none" stroke="#1ea5dd" stroke-width="2.6" stroke-linejoin="round" stroke-linecap="round"/>
<path d="M1025.5 719.43L1033.39 666.44L1041.28 749.71L1049.18 711.86L1057.07 734.57L1064.96 749.71L1072.85 681.58L1080.74 734.57L1088.64 727L1096.53 734.57L1104.42 749.71L1112.31 727L1120.2 719.43L1128.1 757.28L1135.99 787.56L1143.88 727L1151.77 734.57L1159.66 764.85L1167.56 711.86L1175.45 704.29L1183.34 727L1191.23 764.85L1199.12 719.43L1207.02 719.43L1214.91 772.42L1222.8 727L1230.69 704.29L1238.59 719.43L1246.48 727L1254.37 727L1262.26 704.29L1270.15 727L1278.05 749.71L1285.94 681.58L1293.83 764.85L1301.72 719.43L1309.61 711.86L1317.51 749.71L1325.4 681.58L1333.29 719.43L1341.18 719.43L1349.07 742.14L1356.97 727L1364.86 727L1372.75 719.43L1380.64 764.85L1388.53 696.72L1396.43 727L1404.32 719.43L1412.21 734.57L1420.1 696.72L1427.99 757.28L1435.89 749.71L1443.78 711.86L1451.67 719.43L1459.56 689.15L1467.45 727L1475.35 742.14L1483.24 681.58L1491.13 711.86L1499.02 719.43L1506.91 742.14L1514.81 681.58L1522.7 696.72L1530.59 704.29L1538.48 742.14L1546.38 719.43L1554.27 734.57L1562.16 727L1570.05 734.57L1577.94 727L1585.84 749.71L1593.73 696.72L1601.62 757.28L1609.51 719.43L1617.4 696.72L1625.3 681.58L1633.19 696.72L1641.08 757.28L1648.97 727L1656.86 757.28L1664.76 734.57L1672.65 719.43L1680.54 727L1688.43 711.86L1696.32 704.29L1704.22 727L1712.11 727L1720 719.43" fill="none" stroke="#2b2e3b" stroke-width="2.6" stroke-linejoin="round" stroke-linecap="round"/>
<path d="M1025.5 674.01L1033.39 636.16L1041.28 727L1049.18 658.87L1057.07 711.86L1064.96 696.72L1072.85 674.01L1080.74 711.86L1088.64 651.3L1096.53 727L1104.42 727L1112.31 704.29L1120.2 704.29L1128.1 749.71L1135.99 787.56L1143.88 689.15L1151.77 704.29L1159.66 757.28L1167.56 696.72L1175.45 658.87L1183.34 689.15L1191.23 764.85L1199.12 681.58L1207.02 704.29L1214.91 757.28L1222.8 704.29L1230.69 689.15L1238.59 711.86L1246.48 681.58L1254.37 704.29L1262.26 666.44L1270.15 696.72L1278.05 719.43L1285.94 666.44L1293.83 742.14L1301.72 674.01L1309.61 689.15L1317.51 742.14L1325.4 636.16L1333.29 711.86L1341.18 674.01L1349.07 711.86L1356.97 689.15L1364.86 711.86L1372.75 689.15L1380.64 711.86L1388.53 674.01L1396.43 711.86L1404.32 696.72L1412.21 689.15L1420.1 666.44L1427.99 734.57L1435.89 719.43L1443.78 658.87L1451.67 689.15L1459.56 689.15L1467.45 704.29L1475.35 719.43L1483.24 628.59L1491.13 674.01L1499.02 696.72L1506.91 734.57L1514.81 674.01L1522.7 628.59L1530.59 666.44L1538.48 727L1546.38 711.86L1554.27 727L1562.16 711.86L1570.05 711.86L1577.94 719.43L1585.84 727L1593.73 666.44L1601.62 742.14L1609.51 696.72L1617.4 681.58L1625.3 643.73L1633.19 651.3L1641.08 749.71L1648.97 689.15L1656.86 734.57L1664.76 681.58L1672.65 689.15L1680.54 719.43L1688.43 674.01L1696.32 651.3L1704.22 689.15L1712.11 674.01L1720 681.58" fill="none" stroke="#3ccbb0" stroke-width="2.6" stroke-linejoin="round" stroke-linecap="round"/>
<path d="M1025.5 628.59L1033.39 613.45L1041.28 711.86L1049.18 643.73L1057.07 658.87L1064.96 681.58L1072.85 636.16L1080.74 674.01L1088.64 605.88L1096.53 704.29L1104.42 711.86L1112.31 674.01L1120.2 696.72L1128.1 719.43L1135.99 742.14L1143.88 643.73L1151.77 689.15L1159.66 734.57L1167.56 658.87L1175.45 651.3L1183.34 666.44L1191.23 742.14L1199.12 643.73L1207.02 674.01L1214.91 711.86L1222.8 696.72L1230.69 658.87L1238.59 674.01L1246.48 621.02L1254.37 681.58L1262.26 643.73L1270.15 666.44L1278.05 689.15L1285.94 636.16L1293.83 727L1301.72 643.73L1309.61 674.01L1317.51 719.43L1325.4 613.45L1333.29 681.58L1341.18 651.3L1349.07 696.72L1356.97 674.01L1364.86 704.29L1372.75 666.44L1380.64 689.15L1388.53 643.73L1396.43 696.72L1404.32 674.01L1412.21 621.02L1420.1 643.73L1427.99 704.29L1435.89 696.72L1443.78 598.31L1451.67 643.73L1459.56 681.58L1467.45 658.87L1475.35 696.72L1483.24 598.31L1491.13 651.3L1499.02 658.87L1506.91 719.43L1514.81 613.45L1522.7 598.31L1530.59 621.02L1538.48 719.43L1546.38 666.44L1554.27 696.72L1562.16 674.01L1570.05 681.58L1577.94 704.29L1585.84 681.58L1593.73 636.16L1601.62 704.29L1609.51 681.58L1617.4 636.16L1625.3 621.02L1633.19 598.31L1641.08 727L1648.97 674.01L1656.86 719.43L1664.76 666.44L1672.65 651.3L1680.54 711.86L1688.43 651.3L1696.32 560.46L1704.22 666.44L1712.11 651.3L1720 666.44" fill="none" stroke="#a68fdc" stroke-width="2.6" stroke-linejoin="round" stroke-linecap="round"/>
</svg>
</body></html>
